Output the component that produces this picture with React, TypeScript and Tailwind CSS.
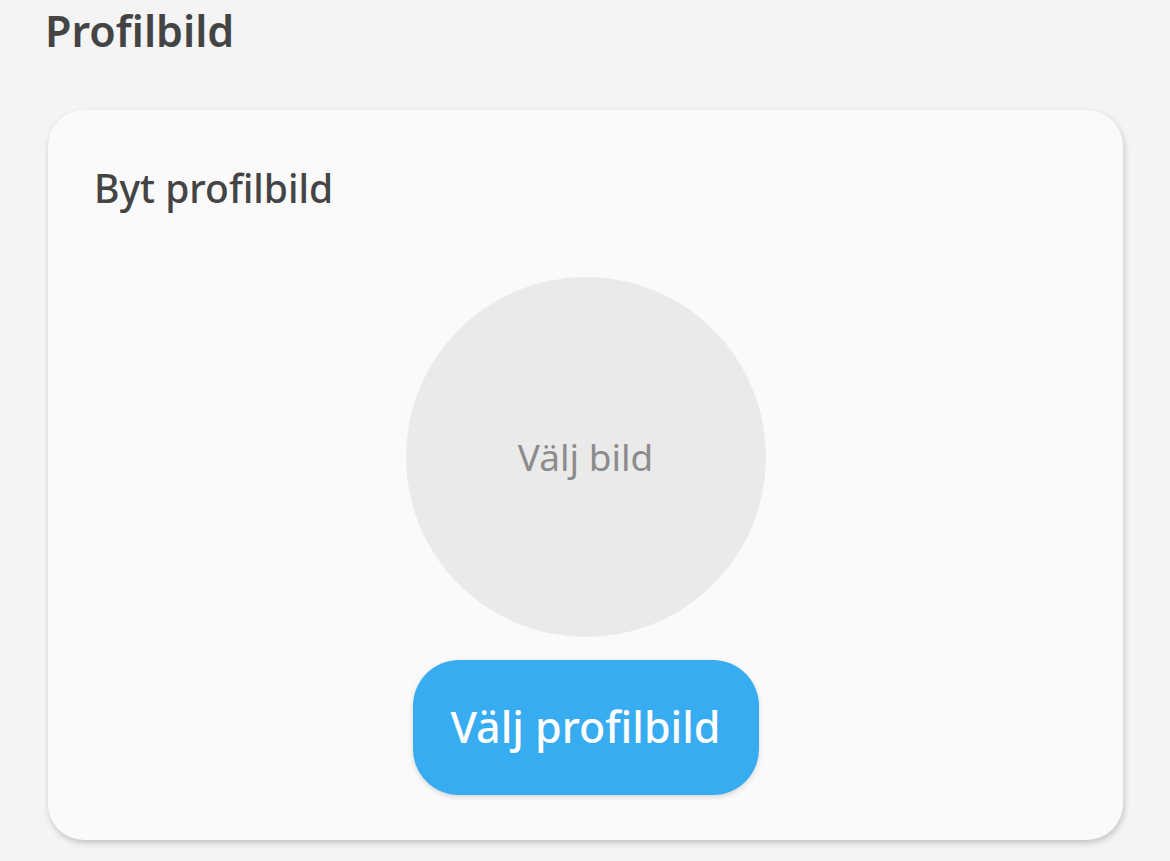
import React from 'react';

const App: React.FC = () => {
    return (
        <div
            className="min-h-screen w-[1170px] h-[861px] overflow-hidden bg-[#f4f4f4] text-[#444444]"
            style={{ fontFamily: '"Noto Sans", "Open Sans", sans-serif' }}
        >
            {/* Page title */}
            <h1 className="pl-[45px] pt-[3px] text-[43px] leading-[56px] font-semibold text-[#444444]">
                Profilbild
            </h1>

            {/* Card */}
            <section className="mx-[48px] mt-[51px] w-[1075px] h-[730px] rounded-[36px] bg-[#fafafa] shadow-[1px_3px_6px_rgba(0,0,0,0.2)] px-[46px] pt-[57px] flex flex-col">
                <h2 className="text-[39px] leading-[42px] font-medium text-[#444444]">Byt profilbild</h2>

                <div className="flex flex-col items-center mt-[68px]">
                    <button className="w-[360px] h-[360px] rounded-full bg-[#eaeaea] flex items-center justify-center">
                        <span className="text-[37px] text-[#8c8c8c]">Välj bild</span>
                    </button>

                    <button className="mt-[23px] w-[346px] h-[135px] rounded-[46px] bg-[#38acf0] shadow-[0_2px_5px_rgba(0,0,0,0.15)] flex items-center justify-center">
                        <span className="text-[43px] font-medium text-white">Välj profilbild</span>
                    </button>
                </div>
            </section>
        </div>
    );
};

export default App;
